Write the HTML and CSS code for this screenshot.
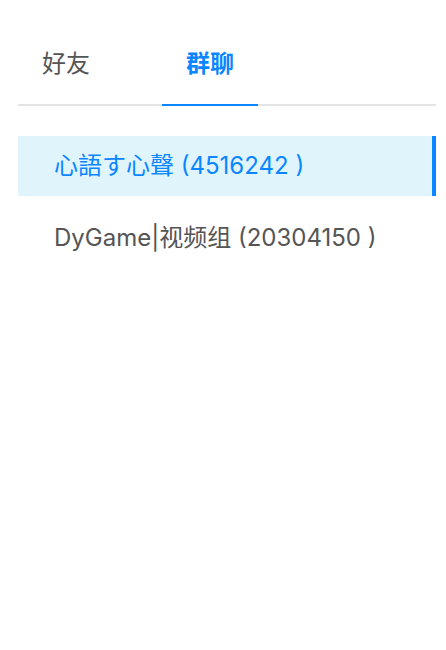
FILE: index.html
```html
<!DOCTYPE html>
<html lang="zh">
<head>
<meta charset="utf-8">
<link rel="stylesheet" href="styles.css">
</head>
<body>
<div class="panel">
  <div class="tabs">
    <div class="tab">好友</div>
    <div class="tab active">群聊</div>
  </div>
  <ul class="list">
    <li class="item selected">心語す心聲 (4516242 )</li>
    <li class="item">DyGame|视频组 (20304150 )</li>
  </ul>
</div>
</body>
</html>
```
FILE: styles.css
```css
html, body {
  margin: 0;
  padding: 0;
  background: #fff;
}
body {
  font-family: Inter, "Noto Sans CJK SC", sans-serif;
}
.panel {
  padding: 24px 10px 0 18px;
}
.tabs {
  display: flex;
  gap: 48px;
  border-bottom: 2px solid #e4e4e4;
}
.tab {
  width: 96px;
  height: 80px;
  line-height: 80px;
  text-align: center;
  font-size: 24px;
  color: #555;
  margin-bottom: -2px;
  border-bottom: 2px solid transparent;
}
.tab.active {
  color: #0a86ff;
  font-weight: 700;
  border-bottom-color: #0a86ff;
}
.list {
  list-style: none;
  margin: 30px 0 0;
  padding: 0;
  display: flex;
  flex-direction: column;
  gap: 12px;
}
.item {
  height: 60px;
  line-height: 60px;
  padding-left: 36px;
  font-size: 24px;
  color: #555;
  border-right: 4px solid transparent;
}
.item.selected {
  background: #e0f4fc;
  color: #0a86ff;
  border-right-color: #0a86ff;
}
```
